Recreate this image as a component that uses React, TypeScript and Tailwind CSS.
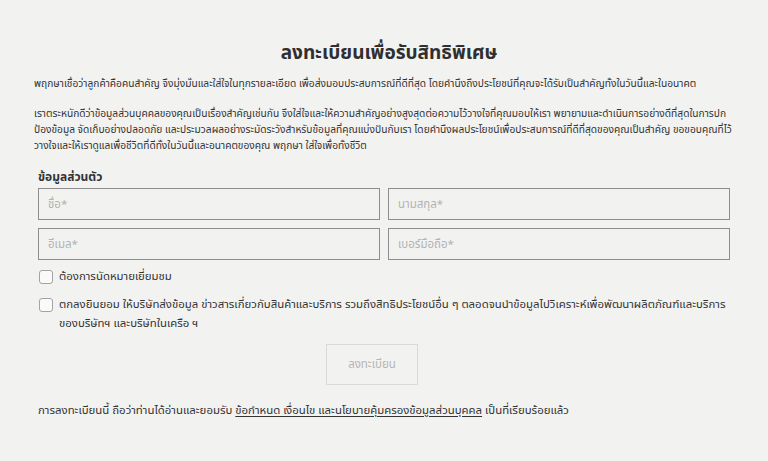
import React from 'react';

const Field: React.FC<{ placeholder: string }> = ({ placeholder }) => (
  <input
    type="text"
    placeholder={placeholder}
    className="h-[32px] w-full border-[1.5px] border-[#8e8e8e] bg-transparent px-[9px] text-[11.5px] text-[#333] placeholder:text-[#b3b3b3] outline-none"
  />
);

const Check: React.FC = () => (
  <span className="mt-[3px] h-[14px] w-[14px] shrink-0 rounded-[3px] border border-[#a3a3a3] bg-[#fafafa]" />
);

const App: React.FC = () => {
  return (
    <div className="min-h-screen bg-[#f2f2f1] font-['Noto_Sans_Thai','Loma','Tahoma','Noto_Sans',sans-serif] text-[#333]">
      <div className="mx-auto w-[700px] pt-[40px]">
        {/* Heading */}
        <h1 className="pl-[10px] text-center text-[19px] font-bold leading-[28px] text-[#2f2f2f]">
          ลงทะเบียนเพื่อรับสิทธิพิเศษ
        </h1>

        <p className="mt-[8px] text-[10.2px] leading-[16px]">
          พฤกษาเชื่อว่าลูกค้าคือคนสำคัญ จึงมุ่งมั่นและใส่ใจในทุกรายละเอียด เพื่อส่งมอบประสบการณ์ที่ดีที่สุด โดยคำนึงถึงประโยชน์ที่คุณจะได้รับเป็นสำคัญทั้งในวันนี้และในอนาคต
        </p>

        <p className="mt-[14px] text-[10.2px] leading-[16px]">
          เราตระหนักดีว่าข้อมูลส่วนบุคคลของคุณเป็นเรื่องสำคัญเช่นกัน จึงใส่ใจและให้ความสำคัญอย่างสูงสุดต่อความไว้วางใจที่คุณมอบให้เรา พยายามและดำเนินการอย่างดีที่สุดในการปก<wbr />ป้องข้อมูล จัดเก็บอย่างปลอดภัย และประมวลผลอย่างระมัดระวังสำหรับข้อมูลที่คุณแบ่งปันกับเรา โดยคำนึงผลประโยชน์เพื่อประสบการณ์ที่ดีที่สุดของคุณเป็นสำคัญ ขอขอบคุณที่ไว้<wbr />วางใจและให้เราดูแลเพื่อชีวิตที่ดีทั้งในวันนี้และอนาคตของคุณ พฤกษา ใส่ใจเพื่อทั้งชีวิต
        </p>

        {/* Form */}
        <form className="px-[4px]">
          <h2 className="mt-[14px] text-[12px] font-bold leading-[18px]">ข้อมูลส่วนตัว</h2>

          <div className="mt-[2px] grid grid-cols-2 gap-x-[8px] gap-y-[8px]">
            <Field placeholder="ชื่อ*" />
            <Field placeholder="นามสกุล*" />
            <Field placeholder="อีเมล*" />
            <Field placeholder="เบอร์มือถือ*" />
          </div>

          <label className="mt-[7px] flex items-start gap-[6px] pl-[1px] text-[11.4px] leading-[20px]">
            <Check />
            <span>ต้องการนัดหมายเยี่ยมชม</span>
          </label>

          <label className="mt-[8px] flex items-start gap-[6px] pl-[1px] text-[11.4px] leading-[19px]">
            <Check />
            <span>
              ตกลงยินยอม ให้บริษัทส่งข้อมูล ข่าวสารเกี่ยวกับสินค้าและบริการ รวมถึงสิทธิประโยชน์อื่น ๆ ตลอดจนนำข้อมูลไปวิเคราะห์เพื่อพัฒนาผลิตภัณฑ์และบริการของบริษัทฯ และบริษัทในเครือ ฯ
            </span>
          </label>

          <button
            type="button"
            className="ml-[288px] mt-[11px] h-[41px] w-[92px] border border-[#d9d9d9] bg-transparent text-[11.5px] text-[#b5b5b5]"
          >
            ลงทะเบียน
          </button>

          <p className="mt-[17px] text-[11.4px] leading-[18px]">
            การลงทะเบียนนี้ ถือว่าท่านได้อ่านและยอมรับ{' '}
            <a className="underline underline-offset-2">ข้อกำหนด เงื่อนไข และนโยบายคุ้มครองข้อมูลส่วนบุคคล</a>{' '}
            เป็นที่เรียบร้อยแล้ว
          </p>
        </form>
      </div>
    </div>
  );
};

export default App;
